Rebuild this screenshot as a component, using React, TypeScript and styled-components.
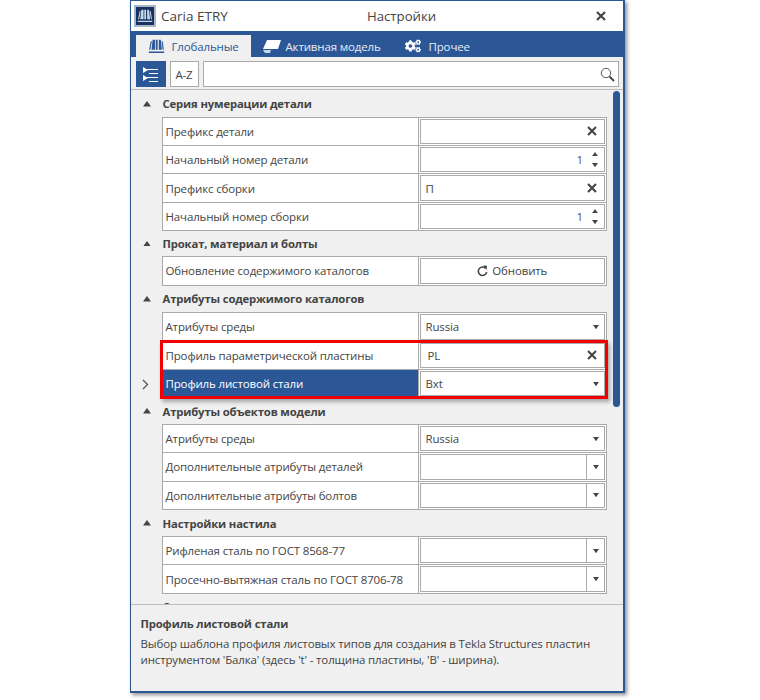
import styled, { createGlobalStyle } from 'styled-components';
import { FaCogs } from 'react-icons/fa';

const BLUE = '#2b5797';
const LINE = '#aaaaaa';

const GlobalStyle = createGlobalStyle`
  html, body {
    margin: 0;
    padding: 0;
    background: #fff;
  }
  body {
    font-family: "Open Sans", "Noto Sans", sans-serif;
    font-size: 11.5px;
    letter-spacing: -0.15px;
    color: #444;
  }
`;

const Page = styled.div`
  width: 760px;
  height: 700px;
  padding-left: 130px;
  box-sizing: border-box;
`;

const Window = styled.div`
  width: 495px;
  height: 693px;
  box-sizing: border-box;
  border: 2px solid ${BLUE};
  border-left-width: 1.5px;
  border-top-width: 1px;
  box-shadow: 2px 2px 4px rgba(0, 0, 0, 0.45);
  display: flex;
  flex-direction: column;
  background: #f0f0f0;
`;

const TitleBar = styled.div`
  height: 30px;
  flex: none;
  background: #fff;
  display: grid;
  grid-template-columns: 233px auto 1fr;
  align-items: center;
  padding: 0 17px 0 3px;
`;

const Brand = styled.div`
  display: flex;
  align-items: center;
  gap: 5px;
  font-size: 13.5px;
  letter-spacing: 0;
`;

const Logo = styled.div`
  width: 22px;
  height: 22px;
  background: #16325f;
  border: 2px solid #a9b6c9;
  box-sizing: border-box;
  display: flex;
  align-items: center;
  justify-content: center;
`;

const Title = styled.div`
  font-size: 13.2px;
  letter-spacing: 0;
`;

const CloseBtn = styled.div`
  justify-self: end;
  display: flex;
`;

const Tabs = styled.div`
  height: 26px;
  flex: none;
  background: ${BLUE};
  display: flex;
  align-items: flex-end;
  padding-left: 4.5px;
`;

const Tab = styled.div<{ $active?: boolean; $width: number; $gap: number }>`
  width: ${p => p.$width}px;
  height: 22px;
  box-sizing: border-box;
  display: flex;
  align-items: center;
  padding-left: 12px;
  gap: ${p => p.$gap}px;
  background: ${p => (p.$active ? '#f0f0f0' : 'transparent')};
  color: ${p => (p.$active ? BLUE : '#e6ecf5')};
`;

const Toolbar = styled.div`
  height: 33px;
  flex: none;
  box-sizing: border-box;
  display: flex;
  gap: 4px;
  padding: 4px 4.5px 0;
  border-bottom: 1px solid #bdbdbd;
`;

const ToolBtn = styled.div<{ $active?: boolean }>`
  width: ${p => (p.$active ? 30 : 29)}px;
  height: 26px;
  box-sizing: border-box;
  display: flex;
  align-items: center;
  justify-content: center;
  background: ${p => (p.$active ? BLUE : '#fff')};
  border: 1px solid ${p => (p.$active ? BLUE : LINE)};
`;

const SearchBox = styled.div`
  flex: 1;
  height: 26px;
  box-sizing: border-box;
  background: #fff;
  border: 1px solid ${LINE};
  display: flex;
  align-items: center;
  justify-content: flex-end;
  padding-right: 3px;
`;

const Body = styled.div`
  flex: 1;
  position: relative;
  overflow: hidden;
  padding-top: 1px;
`;

const Scrollbar = styled.div`
  position: absolute;
  left: 481.5px;
  top: 1px;
  width: 7px;
  height: 316px;
  border-radius: 4px;
  background: ${BLUE};
`;

const Section = styled.div`
  width: 476px;
`;

const SectionHead = styled.div<{ $height: number }>`
  height: ${p => p.$height}px;
  display: flex;
  align-items: center;
  font-weight: 700;
  font-size: 11.3px;
  color: #444;
`;

const Caret = styled.div`
  width: 31.5px;
  flex: none;
  display: flex;
  justify-content: center;
`;

const Rows = styled.div`
  margin-left: 30.5px;
  border-left: 1px solid ${LINE};
  border-top: 1px solid ${LINE};
  border-right: 1px solid ${LINE};
  box-sizing: border-box;
`;

// red annotation frame laid over the two highlighted rows
const Group = styled.div`
  position: relative;

  &::after {
    content: '';
    position: absolute;
    top: -2px;
    left: -3px;
    right: -1.5px;
    bottom: -1px;
    border: 3px solid #f00000;
    box-shadow: 2px 3px 4px rgba(0, 0, 0, 0.3);
    pointer-events: none;
    z-index: 1;
  }
`;

const Row = styled.div`
  height: 28.4px;
  box-sizing: border-box;
  display: grid;
  grid-template-columns: 256px 1fr;
  background: #fff;
  position: relative;
`;

const RowLabel = styled.div<{ $selected?: boolean }>`
  display: flex;
  align-items: center;
  padding-left: 3px;
  border-right: 1px solid ${LINE};
  border-bottom: 1px solid ${LINE};
  background: ${p => (p.$selected ? BLUE : '#fff')};
  color: ${p => (p.$selected ? '#fff' : '#444')};
  white-space: nowrap;
`;

const RowArrow = styled.div`
  position: absolute;
  left: -21px;
  top: 9px;
  display: flex;
`;

const RowValue = styled.div`
  border-bottom: 1px solid ${LINE};
  padding: 1px;
  display: flex;
  min-width: 0;
`;

const Field = styled.div<{ $indent?: number }>`
  flex: 1;
  box-sizing: border-box;
  border: 1px solid ${LINE};
  background: #fff;
  display: flex;
  align-items: center;
  justify-content: space-between;
  padding-left: ${p => p.$indent ?? 5}px;
  min-width: 0;
`;

const FieldIcon = styled.div<{ $width: number }>`
  display: flex;
  align-items: center;
  justify-content: center;
  width: ${p => p.$width}px;
  flex: none;
`;

const DropSeg = styled.div`
  align-self: stretch;
  width: 17px;
  flex: none;
  border-left: 1px solid ${LINE};
  display: flex;
  align-items: center;
  justify-content: center;
`;

const SpinValue = styled.span`
  margin-left: auto;
  margin-right: 3px;
  color: #555;
`;

const Spin = styled.div`
  width: 18px;
  flex: none;
  display: flex;
  flex-direction: column;
  align-items: center;
  gap: 7px;
`;

const RefreshBtn = styled.div`
  flex: 1;
  border: 1px solid ${LINE};
  display: flex;
  align-items: center;
  justify-content: center;
  gap: 4px;
`;

const Description = styled.div`
  height: 87px;
  flex: none;
  box-sizing: border-box;
  border-top: 1px solid #bdbdbd;
  padding: 11px 8px 0 9.5px;
  line-height: 16.5px;
  white-space: nowrap;
`;

const DescTitle = styled.div`
  font-weight: 700;
  font-size: 11.3px;
  margin-bottom: 3px;
`;

const ColumnsIcon = ({ color, size }: { color: string; size: number }) => (
  <svg width={size} height={size * 0.82} viewBox="0 0 22 18">
    <path d="M6 1h3v13H4.5zM10 1h2.5v13H10zM14 1h2.5L18 14h-4zM1 16h20v2H1z" fill={color} />
    <path d="M3 14 5 3H3.5L1.5 14zM19 14 17.5 3H19l1.5 11z" fill={color} />
  </svg>
);

const PlateIcon = () => (
  <svg width="18" height="15" viewBox="0 0 18 15">
    <path d="M4 1h14l-3 9H0z" fill="#fff" />
    <path d="M0 11h8l-1 3H2z" fill="#fff" opacity="0.75" />
  </svg>
);

const TreeIcon = () => (
  <svg width="15" height="15" viewBox="0 0 15 15">
    <path d="M0 0l5 3-5 3zM0 8l5 3-5 3z" fill="#fff" />
    <path d="M4 2.5h11M6 6.5h9M4 10.5h11M6 14.5h9" stroke="#fff" strokeWidth="1" />
  </svg>
);

const Cross = ({ size = 10, color = '#444' }: { size?: number; color?: string }) => (
  <svg width={size} height={size} viewBox="0 0 10 10">
    <path d="M1 1l8 8M9 1L1 9" stroke={color} strokeWidth="2.1" />
  </svg>
);

const Tri = ({ up, w = 6, color = '#444' }: { up?: boolean; w?: number; color?: string }) => (
  <svg width={w} height={w * 0.7} viewBox="0 0 10 7">
    <path d={up ? 'M5 0l5 7H0z' : 'M0 0h10L5 7z'} fill={color} />
  </svg>
);

const SearchGlyph = () => (
  <svg width="15" height="15" viewBox="0 0 15 15" fill="none">
    <circle cx="6" cy="6" r="4.7" stroke="#555" strokeWidth="1" />
    <path d="M9.5 9.5l4.5 4.5" stroke="#444" strokeWidth="1.8" />
  </svg>
);

const RefreshGlyph = () => (
  <svg width="11" height="12" viewBox="0 0 11 12" fill="none">
    <path d="M8.6 3.4A4.2 4.2 0 1 0 9.7 7" stroke="#444" strokeWidth="1.5" />
    <path d="M6 0.5l4 0.2-0.4 4z" fill="#444" />
  </svg>
);

type Kind = 'clear' | 'number' | 'refresh' | 'select' | 'combo';

interface RowData {
  label: string;
  kind: Kind;
  value?: string;
  indent?: number;
  selected?: boolean;
}

interface SectionData {
  title: string;
  height: number;
  rows: RowData[];
}

const SECTIONS: SectionData[] = [
  {
    title: 'Серия нумерации детали',
    height: 25.6,
    rows: [
      { label: 'Префикс детали', kind: 'clear' },
      { label: 'Начальный номер детали', kind: 'number' },
      { label: 'Префикс сборки', kind: 'clear', value: 'П' },
      { label: 'Начальный номер сборки', kind: 'number' },
    ],
  },
  {
    title: 'Прокат, материал и болты',
    height: 25,
    rows: [{ label: 'Обновление содержимого каталогов', kind: 'refresh' }],
  },
  {
    title: 'Атрибуты содержимого каталогов',
    height: 26.6,
    rows: [{ label: 'Атрибуты среды', kind: 'select', value: 'Russia' }],
  },
];

const AFTER: SectionData[] = [
  {
    title: 'Атрибуты объектов модели',
    height: 25.6,
    rows: [
      { label: 'Атрибуты среды', kind: 'select', value: 'Russia' },
      { label: 'Дополнительные атрибуты деталей', kind: 'combo' },
      { label: 'Дополнительные атрибуты болтов', kind: 'combo' },
    ],
  },
  {
    title: 'Настройки настила',
    height: 26,
    rows: [
      { label: 'Рифленая сталь по ГОСТ 8568-77', kind: 'combo' },
      { label: 'Просечно-вытяжная сталь по ГОСТ 8706-78', kind: 'combo' },
    ],
  },
  { title: 'Сварка', height: 26, rows: [] },
];

const renderValue = (row: RowData) => {
  switch (row.kind) {
    case 'clear':
      return (
        <Field $indent={row.indent}>
          <span>{row.value}</span>
          <FieldIcon $width={24}>
            <Cross />
          </FieldIcon>
        </Field>
      );
    case 'number':
      return (
        <Field>
          <SpinValue>1</SpinValue>
          <Spin>
            <Tri up />
            <Tri />
          </Spin>
        </Field>
      );
    case 'refresh':
      return (
        <RefreshBtn>
          <RefreshGlyph />
          Обновить
        </RefreshBtn>
      );
    case 'select':
      return (
        <Field>
          <span>{row.value}</span>
          <FieldIcon $width={17}>
            <Tri />
          </FieldIcon>
        </Field>
      );
    default:
      return (
        <Field>
          <span />
          <DropSeg>
            <Tri />
          </DropSeg>
        </Field>
      );
  }
};

const PropRow = ({ row }: { row: RowData }) => (
  <Row>
    {row.selected && (
      <RowArrow>
        <svg width="7" height="11" viewBox="0 0 7 11" fill="none">
          <path d="M1 1l4.5 4.5L1 10" stroke="#555" strokeWidth="1.3" />
        </svg>
      </RowArrow>
    )}
    <RowLabel $selected={row.selected}>{row.label}</RowLabel>
    <RowValue>{renderValue(row)}</RowValue>
  </Row>
);

const PropSection = ({ section, children }: { section: SectionData; children?: React.ReactNode }) => (
  <Section>
    <SectionHead $height={section.height}>
      <Caret>
        <Tri up w={8} />
      </Caret>
      {section.title}
    </SectionHead>
    {section.rows.length > 0 && (
      <Rows>
        {section.rows.map(row => (
          <PropRow key={row.label} row={row} />
        ))}
        {children}
      </Rows>
    )}
  </Section>
);

const App = () => (
  <Page>
    <GlobalStyle />
    <Window>
      <TitleBar>
        <Brand>
          <Logo>
            <ColumnsIcon color="#c9d4e6" size={16} />
          </Logo>
          Caria ETRY
        </Brand>
        <Title>Настройки</Title>
        <CloseBtn>
          <Cross size={10} />
        </CloseBtn>
      </TitleBar>
      <Tabs>
        <Tab $active $width={115} $gap={7}>
          <ColumnsIcon color={BLUE} size={17} />
          Глобальные
        </Tab>
        <Tab $width={142} $gap={5}>
          <PlateIcon />
          Активная модель
        </Tab>
        <Tab $width={90} $gap={8}>
          <FaCogs size={16} color="#fff" />
          Прочее
        </Tab>
      </Tabs>
      <Toolbar>
        <ToolBtn $active>
          <TreeIcon />
        </ToolBtn>
        <ToolBtn>A-Z</ToolBtn>
        <SearchBox>
          <SearchGlyph />
        </SearchBox>
      </Toolbar>
      <Body>
        <Scrollbar />
        {SECTIONS.slice(0, 2).map(section => (
          <PropSection key={section.title} section={section} />
        ))}
        <PropSection section={SECTIONS[2]}>
          <Group>
            <PropRow row={{ label: 'Профиль параметрической пластины', kind: 'clear', value: 'PL', indent: 7 }} />
            <PropRow row={{ label: 'Профиль листовой стали', kind: 'select', value: 'Bxt', selected: true }} />
          </Group>
        </PropSection>
        {AFTER.map(section => (
          <PropSection key={section.title} section={section} />
        ))}
      </Body>
      <Description>
        <DescTitle>Профиль листовой стали</DescTitle>
        Выбор шаблона профиля листовых типов для создания в Tekla Structures пластин
        <br />
        инструментом 'Балка' (здесь 't' - толщина пластины, 'B' - ширина).
      </Description>
    </Window>
  </Page>
);

export default App;
